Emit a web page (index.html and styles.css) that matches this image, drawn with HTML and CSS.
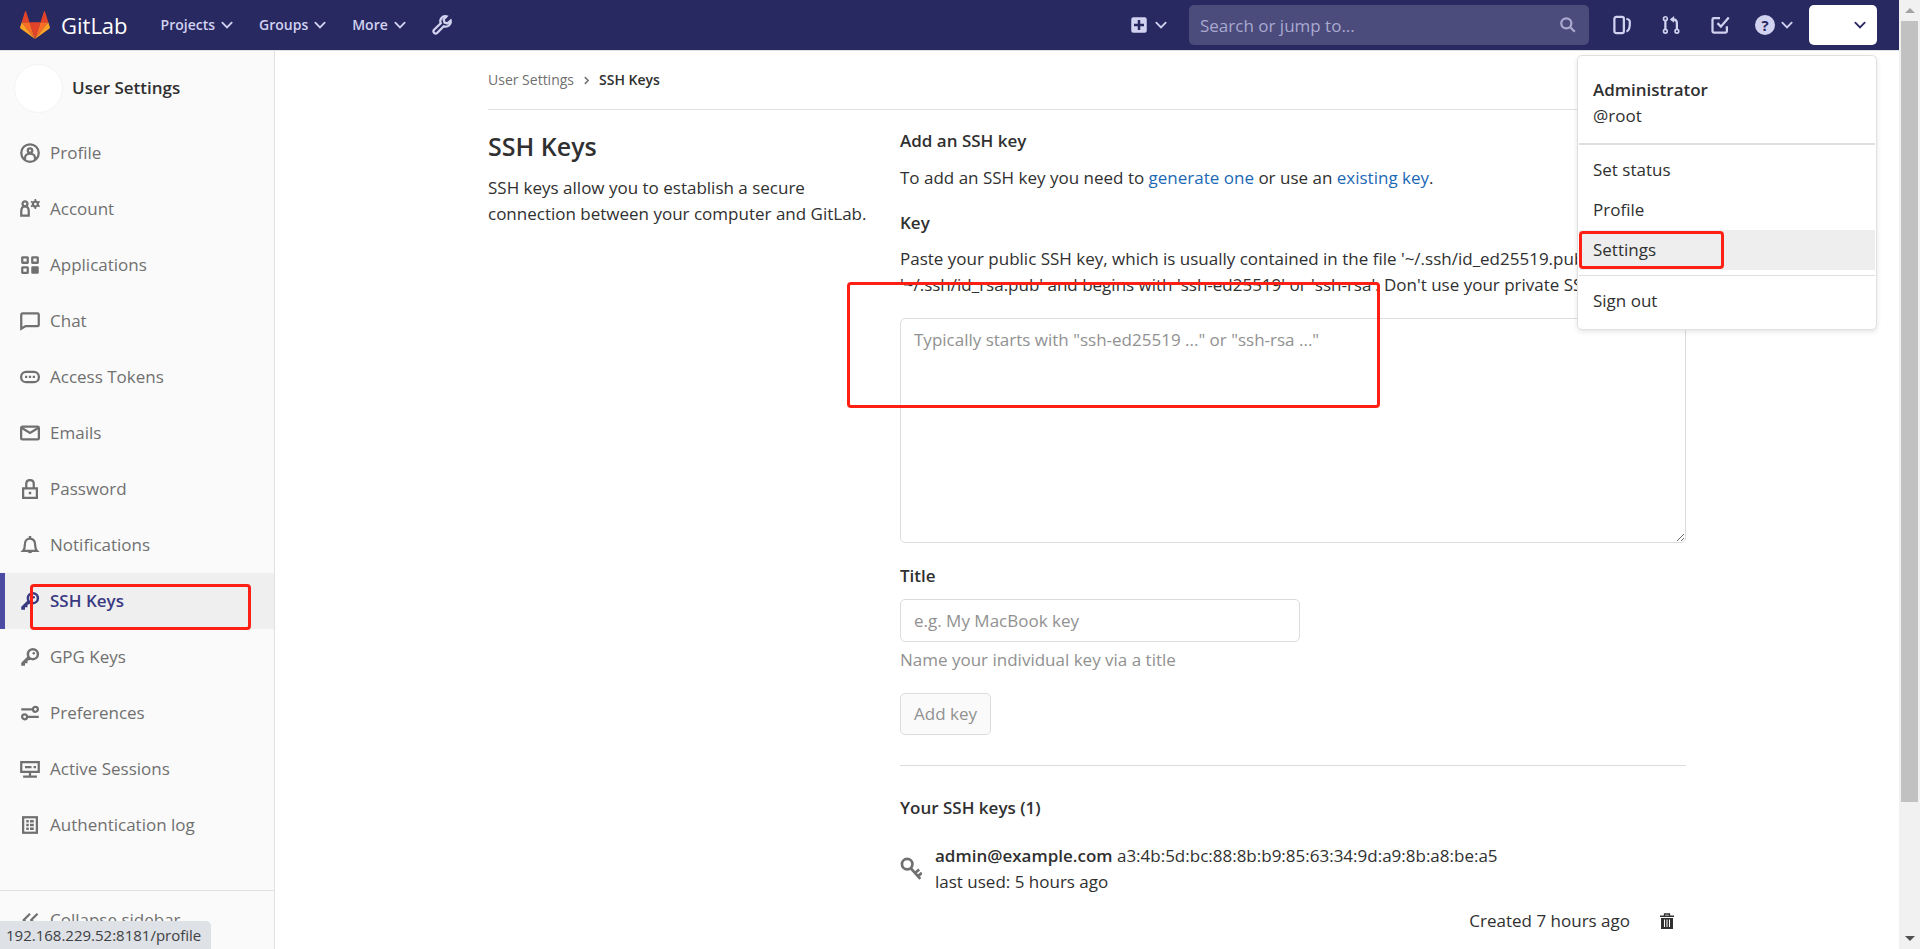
FILE: index.html
```html
<!DOCTYPE html>
<html lang="en">
<head>
<meta charset="utf-8">
<title>SSH Keys · User Settings · GitLab</title>
<link rel="stylesheet" href="styles.css">
</head>
<body>
<div class="window">
  <div class="page">
    <header class="navbar">
      <a class="brand" href="#">
        <svg class="logo" viewBox="0 0 30 28" aria-hidden="true">
          <path fill="#e24329" d="M15 28L9.500 11.200h11z"/>
          <path fill="#fc6d26" d="M15 28L9.500 11.200H1.700zM15 28l5.500-16.800h7.800z"/>
          <path fill="#fca326" d="M1.700 11.200L.1 16.200c-.2.500 0 1 .4 1.300L15 28zM28.300 11.200l1.600 5c.2.500 0 1-.4 1.300L15 28z"/>
          <path fill="#e24329" d="M1.700 11.200h7.800L6.100.6c-.2-.6-.9-.6-1.100 0zM28.300 11.200h-7.800L23.900.6c.2-.6.9-.6 1.100 0z"/>
        </svg>
        <span class="wordmark">GitLab</span>
      </a>
      <nav class="main-nav">
        <button class="nav-button" type="button">Projects<svg class="chevron" viewBox="0 0 12 12"><path d="M2 4l4 4 4-4"/></svg></button>
        <button class="nav-button" type="button">Groups<svg class="chevron" viewBox="0 0 12 12"><path d="M2 4l4 4 4-4"/></svg></button>
        <button class="nav-button" type="button">More<svg class="chevron" viewBox="0 0 12 12"><path d="M2 4l4 4 4-4"/></svg></button>
        <button class="nav-button" type="button" aria-label="Admin Area"><svg class="icon" viewBox="0 0 16 16"><path class="line" d="M11.600 1.100a4 4 0 0 0-4.600 5.500L1.500 12a1.800 1.800 0 0 0 2.500 2.500L9.400 9a4 4 0 0 0 5.500-4.600l-2.500 2.300-2.400-.7-.7-2.400z"/></svg></button>
      </nav>
      <div class="nav-tools">
        <button class="nav-button" type="button" aria-label="New"><svg class="icon" viewBox="0 0 16 16"><path class="solid" fill-rule="evenodd" d="M3.500 1.800h9a1.700 1.700 0 0 1 1.700 1.700v9a1.700 1.700 0 0 1-1.700 1.700h-9a1.700 1.700 0 0 1-1.700-1.700v-9a1.700 1.700 0 0 1 1.700-1.700zM7 4v3H4v2h3v3h2V9h3V7H9V4z"/></svg><svg class="chevron" viewBox="0 0 12 12"><path d="M2 4l4 4 4-4"/></svg></button>
        <div class="search">
          <input class="search-input" type="search" placeholder="Search or jump to..." aria-label="Search">
          <svg class="search-icon" viewBox="0 0 16 16"><circle cx="6.500" cy="6.500" r="4.500"/><path d="M10 10l4 4"/></svg>
        </div>
        <button class="nav-button" type="button" aria-label="Issues"><svg class="icon" viewBox="0 0 16 16"><rect class="line" x="1.900" y="1.500" width="7.600" height="13" rx="1.500"/><path class="line" d="M11.500 3c2.800.6 3 1.200 2.700 5.200-.2 3.200-.8 4.400-2.700 5"/></svg></button>
        <button class="nav-button" type="button" aria-label="Merge requests"><svg class="icon" viewBox="0 0 16 16"><path class="line" d="M3.500 4.500v7M12.700 11.500V6.500c0-2-1-3-3-3H8.500"/><path class="solid" d="M10.500.8v5.400L7 3.500z"/><circle class="thin" cx="3.500" cy="2.900" r="1.500"/><circle class="thin" cx="3.500" cy="13" r="1.500"/><circle class="thin" cx="12.700" cy="13" r="1.500"/></svg></button>
        <button class="nav-button" type="button" aria-label="To-Do List"><svg class="icon" viewBox="0 0 16 16"><path class="line" d="M8 2.500H3a1 1 0 0 0-1 1V13a1 1 0 0 0 1 1h9.500a1 1 0 0 0 1-1V9"/><path class="line" d="M6 6.500l2.700 2.800L15 2"/></svg></button>
        <button class="nav-button help-button" type="button" aria-label="Help"><span class="help-mark">?</span><svg class="chevron" viewBox="0 0 12 12"><path d="M2 4l4 4 4-4"/></svg></button>
        <div class="user-menu">
          <button class="user-button" type="button" aria-label="User menu"><svg class="chevron" viewBox="0 0 12 12"><path d="M2 4l4 4 4-4"/></svg></button>
          <div class="dropdown">
            <div class="current-user"><strong>Administrator</strong><span>@root</span></div>
            <div class="dropdown-group">
              <button class="dropdown-item" type="button">Set status</button>
              <a class="dropdown-item" href="#">Profile</a>
              <a class="dropdown-item hovered" href="#">Settings<span class="mark mark-settings"></span></a>
            </div>
            <div class="dropdown-group sign-out"><a class="dropdown-item" href="#">Sign out</a></div>
          </div>
        </div>
      </div>
    </header>

    <div class="layout">
      <aside class="sidebar">
        <div class="context"><span class="avatar"></span><a href="#">User Settings</a></div>
        <nav class="side-nav">
          <a class="side-item" href="#"><svg class="icon" viewBox="0 0 16 16"><circle class="line" cx="8" cy="8" r="7"/><circle class="line" cx="8" cy="6" r="1.800"/><path class="line" d="M4 13.500V12c0-2 1.600-3.500 4-3.500s4 1.500 4 3.500v1.500"/></svg>Profile</a>
          <a class="side-item" href="#"><svg class="icon" viewBox="0 0 16 16"><circle class="line" cx="4" cy="3.800" r="2"/><path class="line" d="M1 13.200V9.800c0-2.500 1-4 3-4s3 1.500 3 4v3.400z"/><circle class="line" cx="12.300" cy="4" r="2"/><path class="thin" d="M12.300 0v2M12.300 6v2M8.800 2l1.700 1M14 5l1.800 1M8.800 6l1.700-1M14 3l1.800-1"/></svg>Account</a>
          <a class="side-item" href="#"><svg class="icon" viewBox="0 0 16 16"><rect class="line" x="1.800" y="1.800" width="4.400" height="4.400" rx=".3"/><rect class="line" x="9.800" y="1.800" width="4.400" height="4.400" rx=".3"/><rect class="line" x="1.800" y="9.800" width="4.400" height="4.400" rx=".3"/><rect class="solid" x="9" y="9" width="6" height="6" rx="1"/></svg>Applications</a>
          <a class="side-item" href="#"><svg class="icon" viewBox="0 0 16 16"><path class="line" d="M2 1.900h12a1 1 0 0 1 1 1v8.200a1 1 0 0 1-1 1H4.500L1 14.200V2.900a1 1 0 0 1 1-1z"/></svg>Chat</a>
          <a class="side-item" href="#"><svg class="icon" viewBox="0 0 16 16"><rect class="line" x=".9" y="3.900" width="14.200" height="8.200" rx="4"/><path class="solid" d="M4 7h1.800v1.800H4zm3.100 0h1.800v1.800H7.100zm3.100 0H12v1.800h-1.800z"/></svg>Access Tokens</a>
          <a class="side-item" href="#"><svg class="icon" viewBox="0 0 16 16"><rect class="line" x=".9" y="2.900" width="14.200" height="10.200" rx="1"/><path class="line" d="M1.500 4L8 8l6.500-4"/></svg>Emails</a>
          <a class="side-item" href="#"><svg class="icon" viewBox="0 0 16 16"><path class="line" d="M2.500 7.500h11v7.600h-11zM5 7V4c0-4.200 6-4.200 6 0v3"/><path class="solid" d="M7 10.200h2v2H7z"/></svg>Password</a>
          <a class="side-item" href="#"><svg class="icon" viewBox="0 0 16 16"><path class="line" d="M2.500 12.600h11c-1-1-1.300-2-1.300-4 0-3.500-1-5.800-4.200-5.800S3.800 5.100 3.800 8.600c0 2-.3 3-1.300 4z"/><path class="solid" d="M7 .8h2v2H7zM6 13h4c0 2-4 2-4 0z"/></svg>Notifications</a>
          <a class="side-item active" href="#" aria-current="page"><svg class="icon" viewBox="0 0 16 16"><circle class="key-ring" cx="10.300" cy="5.700" r="4"/><circle class="solid" cx="11" cy="5" r="1"/><path class="solid" d="M6 7.500L1 12.500V15h3v-2h2v-2l3-1z"/></svg>SSH Keys<span class="mark mark-keys"></span></a>
          <a class="side-item" href="#"><svg class="icon" viewBox="0 0 16 16"><circle class="key-ring" cx="10.300" cy="5.700" r="4"/><circle class="solid" cx="11" cy="5" r="1"/><path class="solid" d="M6 7.500L1 12.500V15h3v-2h2v-2l3-1z"/></svg>GPG Keys</a>
          <a class="side-item" href="#"><svg class="icon" viewBox="0 0 16 16"><circle class="line" cx="12.300" cy="5" r="2"/><path class="line" d="M1 5h9M6 11h9"/><circle class="line" cx="3.700" cy="11" r="2"/></svg>Preferences</a>
          <a class="side-item" href="#"><svg class="icon" viewBox="0 0 16 16"><path class="line" d="M1 2.500h14v7.800H1zM2.500 14h11M4 6.500h5.200M10.800 6.500h2"/><path class="line" d="M8 10v4"/></svg>Active Sessions</a>
          <a class="side-item" href="#"><svg class="icon" viewBox="0 0 16 16"><rect class="line" x="2.500" y="1.800" width="11" height="12.400"/><path class="solid" d="M5 4h2v2H5zm3 0h3v2H8zM5 7h2v2H5zm3 0h3v2H8zM5 10h2v2H5zm3 0h3v2H8z"/></svg>Authentication log</a>
        </nav>
        <button class="collapse" type="button"><svg class="icon" viewBox="0 0 16 16"><path class="line" d="M8 3L3 8l5 5M14 3L9 8l5 5"/></svg>Collapse sidebar</button>
      </aside>

      <main class="content">
        <div class="container">
          <nav class="breadcrumbs" aria-label="Breadcrumbs"><a href="#">User Settings</a><svg class="crumb-arrow" viewBox="0 0 8 8"><path d="M2.500 1l3 3-3 3"/></svg><a class="current" href="#">SSH Keys</a></nav>
          <div class="columns">
            <section class="intro">
              <h1>SSH Keys</h1>
              <p>SSH keys allow you to establish a secure connection between your computer and GitLab.</p>
            </section>
            <section class="details">
              <h2>Add an SSH key</h2>
              <p class="lead">To add an SSH key you need to <a href="#">generate one</a> or use an <a href="#">existing key</a>.</p>
              <form class="key-form">
                <label class="label" for="key">Key</label>
                <p class="hint">Paste your public SSH key, which is usually contained in the file '~/.ssh/id_ed25519.pub' or<br>'~/.ssh/id_rsa.pub' and begins with 'ssh-ed25519' or 'ssh-rsa'. Don't use your private SSH key.</p>
                <div class="key-field">
                  <textarea class="field key-input" id="key" placeholder="Typically starts with &quot;ssh-ed25519 ...&quot; or &quot;ssh-rsa ...&quot;"></textarea>
                  <span class="mark mark-field"></span>
                </div>
                <label class="label" for="title">Title</label>
                <input class="field title-input" id="title" type="text" placeholder="e.g. My MacBook key">
                <p class="help-text">Name your individual key via a title</p>
                <button class="add-button" type="submit" disabled>Add key</button>
              </form>
              <hr>
              <h2>Your SSH keys (1)</h2>
              <ul class="key-list">
                <li class="key-row">
                  <svg class="key-icon" viewBox="0 0 20 22"><circle cx="6.500" cy="6.500" r="4.800"/><path d="M9.500 10l9 10M14 14.500l3.500-3M16.500 17.500l3.500-3"/></svg>
                  <div class="key-info"><div><a class="key-title" href="#">admin@example.com</a> a3:4b:5d:bc:88:8b:b9:85:63:34:9d:a9:8b:a8:be:a5</div><div>last used: 5 hours ago</div></div>
                  <div class="key-actions"><span>Created 7 hours ago</span><button class="remove" type="button" aria-label="Remove"><svg viewBox="0 0 14 16"><path class="thin" d="M4.500 3V1h5v2"/><path class="solid" fill-rule="evenodd" d="M0 2.500h14V4H0zM1 5h12v11H1zm3 1.500V14h1V6.500zm2.500 0V14h1V6.500zm2.500 0V14h1V6.500z"/></svg></button></div>
                </li>
              </ul>
            </section>
          </div>
        </div>
      </main>
    </div>
  </div>
  <div class="scrollbar"><span class="arrow up"></span><span class="thumb"></span><span class="arrow down"></span></div>
</div>
<div class="status">192.168.229.52:8181/profile</div>
</body>
</html>
```
FILE: styles.css
```css
* { box-sizing: border-box; }
body { margin: 0; font: 17px/26px "Segoe UI", "Open Sans", "Noto Sans", sans-serif; color: #303030; background: #fff; }
h1, h2, p, ul { margin: 0; padding: 0; }
a { color: inherit; text-decoration: none; }
button, input, textarea { font: inherit; color: inherit; }
button { border: 0; background: none; padding: 0; cursor: pointer; }
ul { list-style: none; }

.window { display: grid; grid-template-columns: minmax(0, 1fr) 21px; height: 100vh; overflow: hidden; }
.page { display: flex; flex-direction: column; min-height: 0; }

.icon { width: 20px; height: 20px; flex: none; }
.line, .thin, .key-ring { fill: none; stroke: currentColor; stroke-width: 1.8; }
.thin { stroke-width: 1.3; }
.key-ring { stroke-width: 2; }
.solid { fill: currentColor; }
.chevron { width: 14px; height: 14px; flex: none; fill: none; stroke: currentColor; stroke-width: 1.6; stroke-linecap: round; }

.navbar { position: relative; z-index: 2; flex: none; display: flex; justify-content: space-between; align-items: center; gap: 24px; height: 50px; padding: 0 22px 0 20px; background: #292961; color: #d1d1f0; }
.brand { display: flex; align-items: center; gap: 11px; color: #fff; }
.logo { width: 30px; height: 28px; }
.wordmark { font-size: 22px; line-height: 28px; }
.main-nav { display: flex; align-items: center; gap: 25px; flex: 1; margin-left: 9px; }
.nav-button { display: flex; align-items: center; gap: 5px; font-size: 14px; font-weight: 600; }
.nav-tools { display: flex; align-items: center; gap: 29px; }
.search { position: relative; width: 400px; margin-right: -6px; margin-left: -8px; }
.search-input { display: block; width: 100%; height: 40px; padding: 0 40px 0 11px; border: 0; border-radius: 5px; background: #4b4b7c; }
.search-input::placeholder { color: #a9a9d0; opacity: 1; }
.search-icon { position: absolute; right: 12px; top: 11px; width: 18px; height: 18px; fill: none; stroke: #a9a9d0; stroke-width: 2; }
.help-button { margin-left: -4px; }
.help-mark { flex: none; width: 20px; height: 20px; border-radius: 50%; background: #d1d1f0; color: #292961; font-size: 15px; font-weight: 700; line-height: 20px; text-align: center; }
.user-menu { position: relative; margin-left: -14px; }
.user-button { display: flex; align-items: center; justify-content: flex-end; width: 68px; height: 40px; padding-right: 10px; border-radius: 5px; background: #fff; color: #292961; }

.dropdown { position: absolute; right: 0; top: 50px; width: 300px; padding: 10px 1px 8px; border: 1px solid #e0e0e0; border-radius: 5px; background: #fff; color: #303030; box-shadow: 0 2px 5px rgba(0, 0, 0, .1); }
.current-user { display: flex; flex-direction: column; padding: 11px 14px 14px; }
.current-user strong { font-weight: 600; }
.dropdown-group { padding: 5px 0; border-top: 2px solid #dfdfdf; }
.sign-out { padding-bottom: 0; border-top-width: 1px; }
.dropdown-item { position: relative; display: block; width: 100%; padding: 7px 14px; text-align: left; }
.hovered { background: #eee; }

.mark { position: absolute; z-index: 1; border: 3px solid #ff2015; border-radius: 4px; pointer-events: none; }
.mark-settings { left: 0; top: 1px; width: 145px; height: 38px; }
.mark-keys { left: 30px; right: 23px; top: 11px; height: 46px; }
.mark-field { left: -53px; top: -36px; width: 533px; height: 126px; }

.layout { flex: 1; display: flex; min-height: 0; border-top: 1px solid #e1e1e1; }
.sidebar { flex: none; display: flex; flex-direction: column; width: 275px; border-right: 1px solid #e1e1e1; background: #fafafa; color: #707070; }
.context { display: flex; align-items: center; gap: 9px; height: 74px; padding-left: 14px; color: #303030; font-weight: 600; }
.avatar { width: 49px; height: 49px; border: 1px solid #f4f4f4; border-radius: 50%; background: #fff; }
.side-nav { flex: 1; }
.side-item { position: relative; display: flex; align-items: center; gap: 10px; height: 56px; padding-left: 20px; }
.active { background: #efefef; box-shadow: inset 5px 0 #4b4ba3; color: #393982; font-weight: 600; }
.collapse { display: flex; align-items: center; gap: 10px; height: 59px; padding-left: 20px; border-top: 1px solid #e1e1e1; }

.content { flex: 1; min-width: 0; padding: 0 20px; overflow: hidden; }
.container { max-width: 1198px; margin: 0 auto; }
.breadcrumbs { display: flex; align-items: center; gap: 8px; height: 59px; border-bottom: 1px solid #e1e1e1; color: #707070; font-size: 14px; }
.crumb-arrow { width: 9px; height: 9px; fill: none; stroke: currentColor; stroke-width: 1.3; }
.current { color: #303030; font-weight: 600; }
.columns { display: grid; grid-template-columns: minmax(0, 382px) minmax(0, 1fr); gap: 30px; padding-top: 18px; }
.intro h1 { margin-bottom: 11px; font-size: 25px; font-weight: 600; line-height: 36px; }
h2 { font-size: 17px; font-weight: 600; line-height: 26px; }
.lead { margin: 11px 0 19px; }
.lead a { color: #1b69b6; }
.label { display: block; font-weight: 600; }
.hint { margin: 10px 0 20px; white-space: nowrap; }
.key-field { position: relative; margin-bottom: 20px; }
.field { display: block; padding: 8px 13px; border: 1px solid #dcdcdc; border-radius: 5px; background: #fff; }
.field::placeholder { color: #919191; opacity: 1; }
.key-input { width: 100%; height: 225px; resize: vertical; }
.title-input { width: 400px; height: 43px; margin-top: 10px; }
.help-text { margin: 5px 0 20px; color: #919191; }
.add-button { height: 42px; padding: 0 13px; border: 1px solid #dcdcdc; border-radius: 5px; background: #fafafa; color: #919191; }
hr { margin: 30px 0 29px; border: 0; border-top: 1px solid #dcdcdc; }
.key-list { padding-top: 22px; }
.key-row { display: grid; grid-template-columns: 22px minmax(0, 1fr); column-gap: 13px; row-gap: 13px; align-items: center; }
.key-icon { width: 22px; height: 24px; fill: none; stroke: #707070; stroke-width: 2.5; }
.key-title { font-weight: 600; }
.key-actions { grid-column: 2; display: flex; align-items: center; justify-content: flex-end; gap: 30px; padding-right: 12px; }
.remove svg { display: block; width: 14px; height: 16px; }

.scrollbar { display: flex; flex-direction: column; align-items: center; background: #f1f1f1; padding: 8px 0; }
.arrow { border: 5px solid transparent; }
.up { border-top: 0; border-bottom-color: #a3a3a3; }
.thumb { width: 17px; height: 781px; margin-top: 8px; background: #c1c1c1; }
.down { margin-top: auto; border-bottom: 0; border-top-color: #505050; }
.status { position: fixed; z-index: 3; left: 0; bottom: 0; padding: 1px 10px 1px 6px; border-radius: 0 5px 0 0; background: #dee1e6; color: #3c4043; font-size: 15px; }
```
